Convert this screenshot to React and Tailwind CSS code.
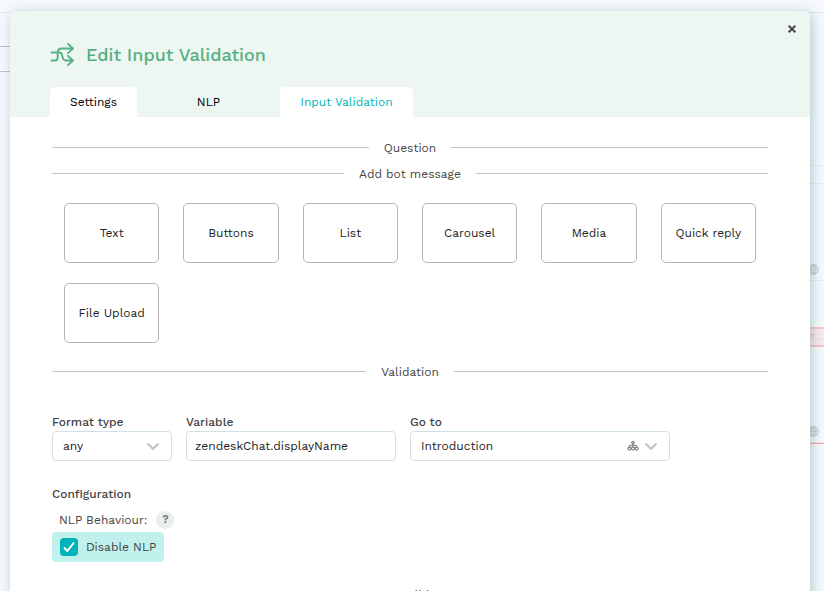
import React from "react";

const messageTypes = ["Text", "Buttons", "List", "Carousel", "Media", "Quick reply", "File Upload"];

function Divider({ children }) {
  return (
    <div className="flex h-[26px] items-center gap-[15px] text-[12px] text-[#444]">
      <span className="h-0.5 flex-1 border-t border-[#c4c4c4]" />
      <h2>{children}</h2>
      <span className="h-0.5 flex-1 border-t border-[#c4c4c4]" />
    </div>
  );
}

function Globe({ className }) {
  return (
    <svg className={className} width="11" height="11" viewBox="0 0 11 11" fill="none" stroke="#c3cacc" aria-hidden="true">
      <circle cx="5.5" cy="5.5" r="4.8" />
      <ellipse cx="5.5" cy="5.5" rx="2.3" ry="4.8" />
      <path d="M5.5 .7v9.6M.7 5.5h9.6M1.4 3h8.2M1.4 8h8.2" strokeWidth=".7" />
    </svg>
  );
}

function Chevron() {
  return (
    <svg width="14" height="14" viewBox="0 0 14 14" fill="none" stroke="#c6c6c6" strokeWidth="2.4" aria-hidden="true">
      <path d="M1.5 4.5 7 9.8l5.5-5.3" />
    </svg>
  );
}

function Network() {
  return (
    <svg width="12" height="12" viewBox="0 0 12 12" fill="none" stroke="#808080" strokeWidth="1.2" aria-hidden="true">
      <circle cx="6" cy="2.6" r="1.2" />
      <circle cx="2.4" cy="8.6" r="1.5" />
      <circle cx="6" cy="8.6" r="1.5" />
      <circle cx="9.6" cy="8.6" r="1.5" />
      <path d="M6 3.8v3.3M2.4 7.1V6L6 4.8 9.6 6v1.1" />
    </svg>
  );
}

function Canvas() {
  return (
    <div className="absolute inset-0" aria-hidden="true">
      <div className="absolute inset-x-0 top-[12px] h-px bg-[#e4e9ec]" />
      <div className="absolute left-0 top-[46px] h-[26px] w-5 border-y border-[#bcc1c4]" />
      <div className="absolute right-0 top-[165px] h-[19px] w-6 border-y border-[#e9eef1]" />
      <Globe className="absolute right-[5px] top-[264px]" />
      <div className="absolute right-0 top-[280px] h-px w-6 bg-[#e9eef1]" />
      <div className="absolute right-0 top-[327px] h-[20px] w-5 border-y-2 border-[#f8c6ce] bg-[#f9e9ed] pl-1.5 text-[9px] leading-[16px] text-[#efc0c8]">
        T...
      </div>
      <Globe className="absolute right-[5px] top-[426px]" />
      <div className="absolute right-0 top-[442px] h-0.5 w-6 border-b border-[#f3a5b1] bg-[#f9dfe4]" />
    </div>
  );
}

const tabs = [
  { name: "Settings", style: "min-w-[87px] bg-white text-black" },
  { name: "NLP", style: "min-w-[63px] text-black" },
  { name: "Input Validation", style: "min-w-[133px] bg-white text-[#00b5b5]" },
];

export default function App() {
  return (
    <div className="relative h-screen overflow-hidden bg-[#f5f9fd] font-['Work_Sans','Inter',sans-serif] text-[12px] leading-4 text-[#222]">
      <Canvas />
      <main
        role="dialog"
        aria-labelledby="dialog-title"
        className="relative mt-[11px] mr-[14px] ml-[10px] min-h-full rounded-t-[6px] bg-white shadow-[2px_2px_12px_rgba(20,90,80,0.3)]"
      >
        <header className="relative rounded-t-[6px] bg-[#edf6f1] px-10 pt-[30px]">
          <button type="button" aria-label="Close" className="absolute top-[12px] right-[12px] flex h-3 w-3 items-center justify-center">
            <svg width="8" height="8" viewBox="0 0 8 8" stroke="#484848" strokeWidth="2" aria-hidden="true">
              <path d="m.7.7 6.6 6.6M7.3.7.7 7.3" />
            </svg>
          </button>
          <div className="flex h-7 items-center gap-3 text-[#57b083]">
            <svg width="24" height="24" viewBox="0 0 24 24" fill="none" stroke="currentColor" strokeWidth="1.9" strokeLinecap="round" strokeLinejoin="round" aria-hidden="true">
              <path d="M1.500 9.500h8c2 0 2.500 1.200 2.800 3.500.4 3.200 1.200 4.500 3.700 4.500h7M1.500 17.500h3.500c2 0 2.700-1 2.700-3V9.500C7.700 6.700 9 5.500 12 5.500h11M18 .9l5 4.600-5 4.600M18 12.900l5 4.600-5 4.600" />
            </svg>
            <h1 id="dialog-title" className="text-[18px] leading-7 font-medium">Edit Input Validation</h1>
          </div>
          <div role="tablist" className="mt-[18px] flex gap-10">
            {tabs.map((tab) => (
              <button
                key={tab.name}
                type="button"
                role="tab"
                aria-selected={tab.name === "Input Validation"}
                className={`h-[30px] rounded-t-[5px] text-center ${tab.style}`}
              >
                {tab.name}
              </button>
            ))}
          </div>
        </header>

        <div className="px-[42px] pt-[18px]">
          <Divider>Question</Divider>
          <Divider>Add bot message</Divider>

          <div className="mt-4 grid grid-cols-6 gap-x-6 gap-y-5 px-3">
            {messageTypes.map((type) => (
              <button key={type} type="button" className="h-[60px] rounded-[5px] border border-[#b5b5b5] whitespace-nowrap">
                {type}
              </button>
            ))}
          </div>

          <div className="mt-4">
            <Divider>Validation</Divider>
          </div>

          <div className="mt-[29px] flex gap-[14px]">
            <div className="w-[120px]">
              <label htmlFor="format" className="block font-medium text-[#444]">Format type</label>
              <div className="relative mt-px">
                <select id="format" className="h-[30px] w-full appearance-none rounded-[4px] border border-[#d0dfe8] bg-white px-[10px]">
                  <option>any</option>
                </select>
                <span className="pointer-events-none absolute inset-y-0 right-3 flex items-center">
                  <Chevron />
                </span>
              </div>
            </div>
            <div className="w-[210px]">
              <label htmlFor="variable" className="block font-medium text-[#444]">Variable</label>
              <input id="variable" defaultValue="zendeskChat.displayName" className="mt-px h-[30px] w-full rounded-[4px] border border-[#d0dfe8] bg-white px-2" />
            </div>
            <div className="w-[260px]">
              <label htmlFor="goto" className="block font-medium text-[#444]">Go to</label>
              <div className="relative mt-px">
                <select id="goto" className="h-[30px] w-full appearance-none rounded-[4px] border border-[#d0dfe8] bg-white px-[10px]">
                  <option>Introduction</option>
                </select>
                <span className="pointer-events-none absolute inset-y-0 right-3 flex items-center gap-[5px]">
                  <Network />
                  <Chevron />
                </span>
              </div>
            </div>
          </div>

          <h3 className="mt-[25px] font-medium text-[#444]">Configuration</h3>
          <div className="mt-[9px] flex h-[18px] items-center gap-[9px] pl-[7px] text-[#444]">
            <span>NLP Behaviour:</span>
            <button type="button" aria-label="Help" className="h-[18px] w-[18px] rounded-full bg-[#e8eff1] text-[11px] leading-[18px] font-semibold text-[#777]">?</button>
          </div>
          <label className="mt-[3px] flex h-[30px] w-fit items-center gap-2 rounded-[4px] bg-[#c0f1ed] px-2 text-[#444]">
            <span className="grid h-[18px] w-[18px]">
              <input type="checkbox" defaultChecked className="col-start-1 row-start-1 appearance-none rounded-[4px] checked:bg-[#00b3b8]" />
              <svg className="pointer-events-none col-start-1 row-start-1" width="18" height="18" viewBox="0 0 18 18" fill="none" stroke="white" strokeWidth="2" aria-hidden="true">
                <path d="m4 9.5 3.3 3.5L14 4.5" />
              </svg>
            </span>
            Disable NLP
          </label>

          <div className="mt-5">
            <Divider>Invalid</Divider>
          </div>
        </div>
      </main>
    </div>
  );
}
